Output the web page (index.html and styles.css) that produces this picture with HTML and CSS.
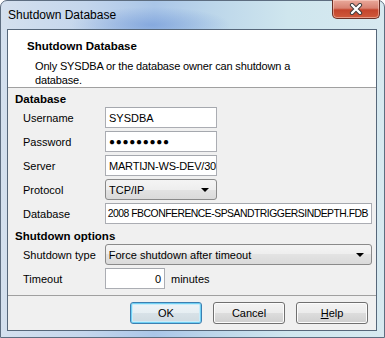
FILE: index.html
```html
<!DOCTYPE html>
<html>
<head>
  <title>Shutdown Database</title>
  <meta charset="UTF-8">
  <link rel="stylesheet" href="styles.css">
</head>
<body>

<div class="window">
  <div class="titlebar">
    <span class="title">Shutdown Database</span>
    <div class="close">
      <svg width="16" height="12" viewBox="0 0 16 12">
        <path d="M4 2 L12 10 M12 2 L4 10" stroke="#3b3b3b" stroke-width="4.2" stroke-linecap="round"/>
        <path d="M4 2 L12 10 M12 2 L4 10" stroke="#ffffff" stroke-width="2.4" stroke-linecap="round"/>
      </svg>
    </div>
  </div>

  <div class="client">
    <div class="header">
      <div class="header-title">Shutdown Database</div>
      <div class="header-text">Only SYSDBA or the database owner can shutdown a database.</div>
    </div>

    <div class="content">
      <div class="group-title">Database</div>
      <div class="row">
        <span class="label">Username</span>
        <div class="edit short">SYSDBA</div>
      </div>
      <div class="row">
        <span class="label">Password</span>
        <div class="edit short dots">●●●●●●●●●</div>
      </div>
      <div class="row">
        <span class="label">Server</span>
        <div class="edit short tight">MARTIJN-WS-DEV/30</div>
      </div>
      <div class="row">
        <span class="label">Protocol</span>
        <div class="combo short">TCP/IP<span class="arrow"></span></div>
      </div>
      <div class="row">
        <span class="label">Database</span>
        <div class="edit long path">2008 FBCONFERENCE-SPSANDTRIGGERSINDEPTH.FDB</div>
      </div>

      <div class="group-title second">Shutdown options</div>
      <div class="row">
        <span class="label">Shutdown type</span>
        <div class="combo long">Force shutdown after timeout<span class="arrow"></span></div>
      </div>
      <div class="row">
        <span class="label">Timeout</span>
        <div class="edit tiny">0</div>
        <span class="unit">minutes</span>
      </div>
    </div>

    <div class="footer">
      <div class="button default">OK</div>
      <div class="button">Cancel</div>
      <div class="button"><u>H</u>elp</div>
    </div>
  </div>
</div>

</body>
</html>
```

FILE: styles.css
```css
body {
    margin: 0;
    width: 385px;
    height: 338px;
    overflow: hidden;
    font-family: "Liberation Sans", Arial, sans-serif;
    font-size: 11px;
    color: #000;
    background: #ffffff;
}
.window {
    width: 385px;
    height: 338px;
    box-sizing: border-box;
    border: 1px solid #5d6d80;
    border-radius: 7px 7px 0 0;
    padding: 0 7px 6px 6px;
    display: flex;
    flex-direction: column;
    background:
        radial-gradient(ellipse 80px 18px at 150px 24px, rgba(110, 150, 215, 0.6), rgba(110, 150, 215, 0) 100%),
        linear-gradient(90deg, #d4e0ee 0%, #c4d6ec 22%, #aac6e8 40%, #bcd6ea 55%, #cfe6ee 75%, #d7e9f0 100%);
}
.titlebar {
    height: 28px;
    display: flex;
    align-items: center;
    padding-left: 1px;
}
.title {
    font-size: 12px;
    line-height: 14px;
    color: #000;
}
.close {
    margin-left: auto;
    margin-right: -3px;
    align-self: flex-start;
    margin-top: -1px;
    width: 46px;
    height: 18px;
    border: 1px solid #6b3026;
    border-top: 0;
    border-radius: 0 0 5px 5px;
    background: linear-gradient(#e9a99b 0%, #d88272 45%, #c4442c 55%, #cf5a3c 100%);
    display: flex;
    align-items: center;
    justify-content: center;
    box-shadow: inset 0 0 0 1px rgba(255, 220, 210, 0.5);
}
.client {
    flex: 1;
    border: 1px solid #56677a;
    background: #f0f0f0;
    display: flex;
    flex-direction: column;
}
.header {
    height: 58px;
    box-sizing: border-box;
    background: #ffffff;
    border-bottom: 1px solid #a0a0a0;
    padding: 9px 0 0 19px;
}
.header-title {
    font-weight: bold;
    font-size: 11.5px;
    line-height: 15px;
}
.header-text {
    margin: 5px 0 0 8px;
    width: 275px;
    line-height: 14px;
    letter-spacing: -0.15px;
}
.content {
    padding: 4px 4px 0 7px;
}
.group-title {
    font-weight: bold;
    font-size: 11.5px;
    line-height: 15px;
}
.group-title.second {
    margin-top: 5px;
}
.row {
    display: flex;
    align-items: center;
    height: 21px;
    margin-top: 3px;
    padding-left: 8px;
}
.group-title + .row {
    margin-top: 0;
}
.label {
    width: 82px;
}
.edit, .combo {
    height: 21px;
    box-sizing: border-box;
    display: flex;
    align-items: center;
    padding: 0 3px;
    white-space: nowrap;
    overflow: hidden;
}
.edit {
    background: #ffffff;
    border: 1px solid #abadb3;
    border-top-color: #a5a8ae;
}
.edit.path {
    font-size: 10.4px;
    letter-spacing: -0.5px;
    padding-left: 2px;
}
.edit.tight {
    letter-spacing: -0.2px;
}
.edit.dots {
    font-size: 10px;
    letter-spacing: 0.7px;
}
.edit.tiny {
    width: 60px;
    justify-content: flex-end;
}
.combo {
    border: 1px solid #8a8a8a;
    border-radius: 3px;
    background: linear-gradient(#f4f4f4 0%, #eeeeee 50%, #e3e3e3 50%, #dadada 100%);
}
.arrow {
    margin-left: auto;
    margin-right: 4px;
    width: 0;
    height: 0;
    border-left: 4px solid transparent;
    border-right: 4px solid transparent;
    border-top: 4px solid #000;
}
.short {
    width: 112px;
}
.long {
    width: 268px;
}
.unit {
    margin-left: 6px;
}
.footer {
    margin-top: auto;
    height: 35px;
    box-sizing: border-box;
    border-top: 1px solid #a0a0a0;
    display: flex;
    justify-content: flex-end;
    gap: 11px;
    padding: 6px 8px 0 0;
}
.button {
    width: 72px;
    height: 22px;
    box-sizing: border-box;
    border: 1px solid #707070;
    border-radius: 3px;
    background: linear-gradient(#f3f3f3 0%, #ebebeb 50%, #dddddd 50%, #cfcfcf 100%);
    display: flex;
    align-items: center;
    justify-content: center;
    box-shadow: inset 0 0 0 1px #fcfcfc;
}
.button.default {
    border-color: #3c7fb1;
    box-shadow: inset 0 0 0 1px #6fd0f4, inset 0 0 0 2px #c8ecfa;
    background: linear-gradient(#eef4f7 0%, #e6eef2 50%, #d8e2e8 50%, #cfdae0 100%);
}
```
